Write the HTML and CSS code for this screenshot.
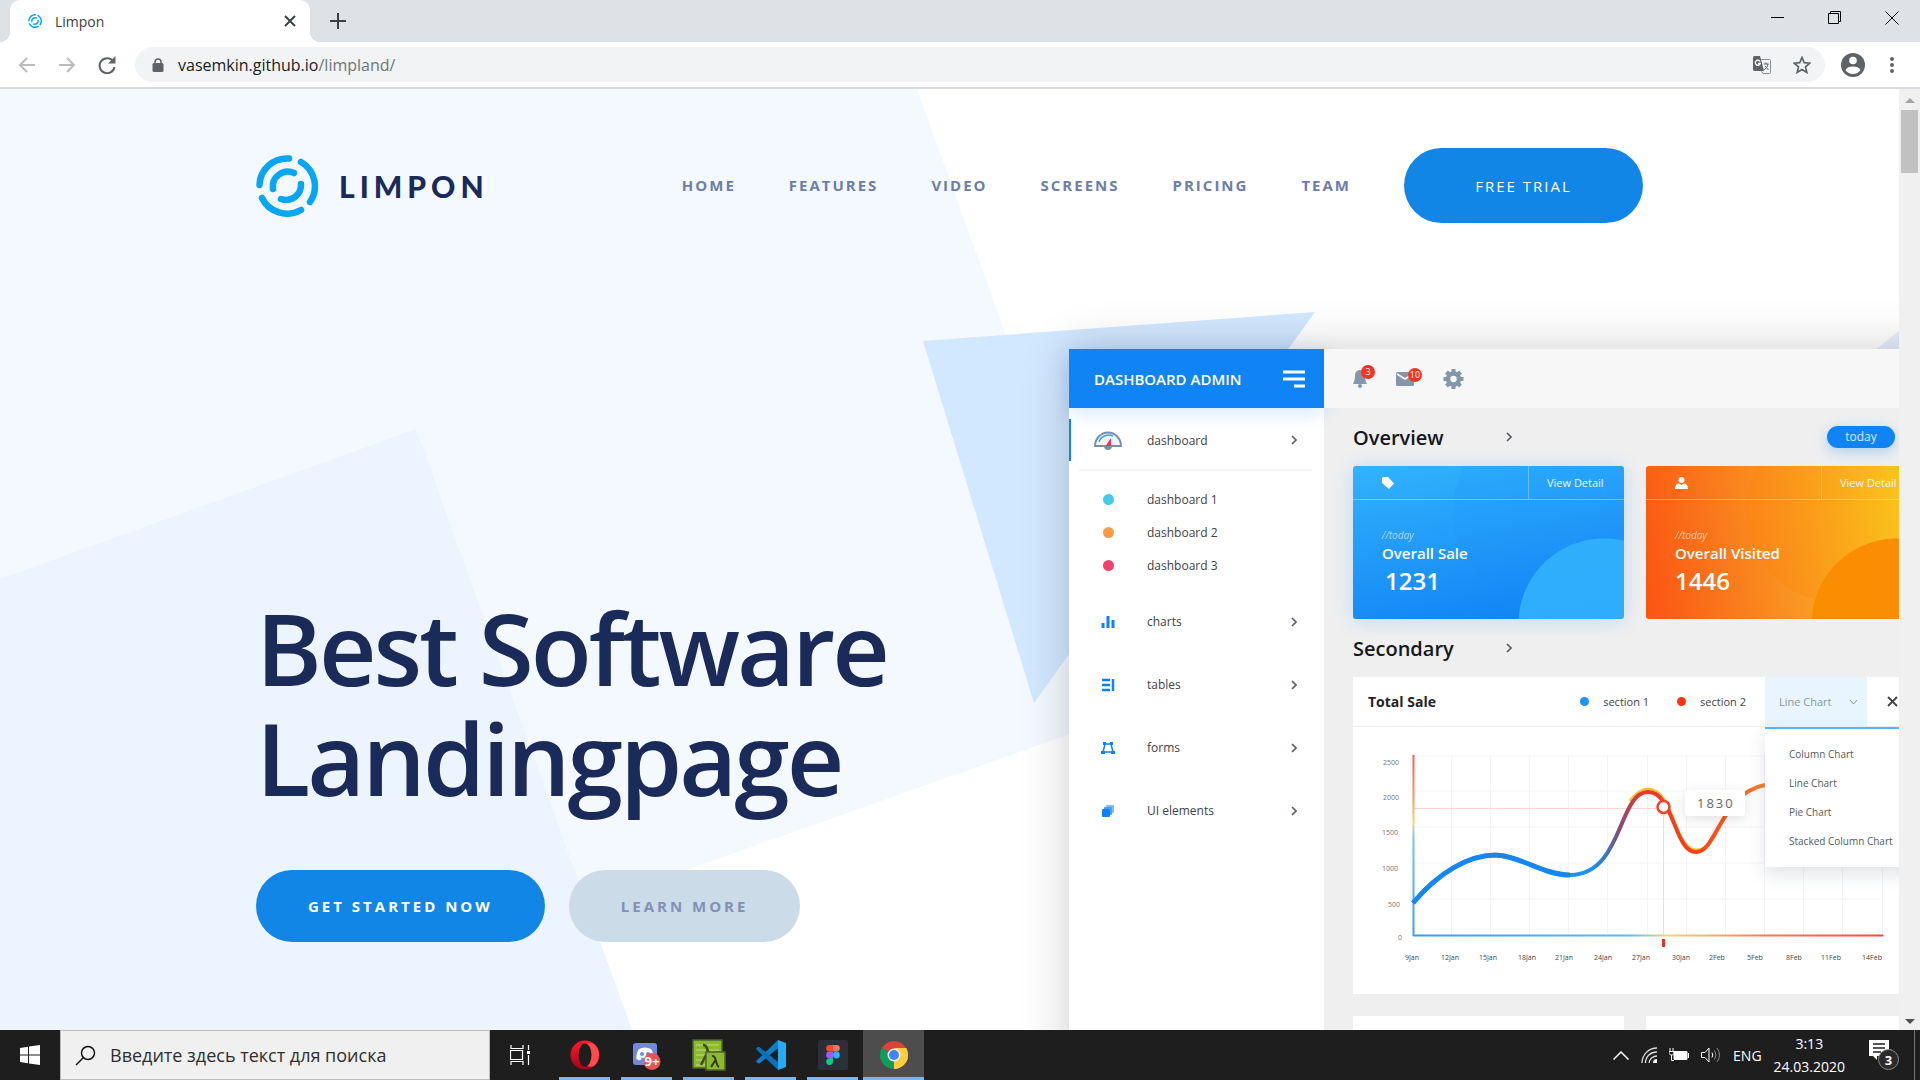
FILE: index.html
```html
<!DOCTYPE html>
<html lang="en">
<head>
<meta charset="utf-8">
<title>Limpon</title>
<link rel="stylesheet" href="styles.css">
</head>
<body>
<svg class="defs" width="0" height="0" aria-hidden="true">
  <symbol id="logo" viewBox="0 0 62 62">
    <g fill="none" stroke="#05a6f4" stroke-width="6.500" stroke-linecap="round">
      <path d="M33 3.500A27.500 27.500 0 0 0 3.500 30"/>
      <path d="M45 7A28 28 0 0 1 54 47"/>
      <path d="M6 43A28 28 0 0 0 45 55"/>
      <path d="M38 18A15 15 0 0 0 17 34"/>
      <path d="M45 29A15 15 0 0 1 25 44"/>
    </g>
  </symbol>
  <symbol id="chev" viewBox="0 0 6 10"><path d="M1 1l4 4-4 4" fill="none" stroke="#5a5f67" stroke-width="1.700"/></symbol>
</svg>

<header class="browser">
  <div class="tabstrip">
    <div class="tab">
      <svg class="favicon"><use href="#logo"/></svg>
      <span class="tab-title">Limpon</span>
      <button class="bare" aria-label="Close tab"><svg width="12" height="12" viewBox="0 0 12 12"><path d="M1 1l10 10M11 1L1 11" stroke="#3c4043" stroke-width="2"/></svg></button>
    </div>
    <button class="bare new-tab" aria-label="New tab"><svg width="16" height="16" viewBox="0 0 16 16"><path d="M8 0v16M0 8h16" stroke="#3c4043" stroke-width="2"/></svg></button>
    <div class="window-controls">
      <button class="bare" aria-label="Minimize"><svg width="14" height="14" viewBox="0 0 14 14"><path d="M0 6.500h13" stroke="#000"/></svg></button>
      <button class="bare" aria-label="Restore"><svg width="14" height="14" viewBox="0 0 14 14"><path d="M.5 2.500h10v10H.5zM2.500 2.500v-2h10v10h-2" fill="none" stroke="#000"/></svg></button>
      <button class="bare" aria-label="Close"><svg width="14" height="14" viewBox="0 0 14 14"><path d="M.5.5l13 13M13.500.5l-13 13" stroke="#000"/></svg></button>
    </div>
  </div>
  <div class="toolbar">
    <button class="bare tool" aria-label="Back"><svg width="18" height="18" viewBox="0 0 18 18"><path d="M17 9H2M9 2L2 9l7 7" fill="none" stroke="#babcbe" stroke-width="2"/></svg></button>
    <button class="bare tool" aria-label="Forward"><svg width="18" height="18" viewBox="0 0 18 18"><path d="M1 9h15M9 2l7 7-7 7" fill="none" stroke="#babcbe" stroke-width="2"/></svg></button>
    <button class="bare tool" aria-label="Reload"><svg width="18" height="18" viewBox="0 0 18 18"><path d="M15 5A7.500 7.500 0 1 0 16.500 11" fill="none" stroke="#5f6368" stroke-width="2"/><path d="M17.500 0v7.500H10z" fill="#5f6368"/></svg></button>
    <div class="omnibox">
      <svg width="12" height="14" viewBox="0 0 12 14"><path d="M3 6V4a3 3 0 0 1 6 0v2" fill="none" stroke="#5f6368" stroke-width="1.500"/><rect x=".5" y="5" width="11" height="9" rx="1.500" fill="#5f6368"/></svg>
      <span class="url">vasemkin.github.io<span class="path">/limpland/</span></span>
      <svg class="translate" width="18" height="18" viewBox="0 0 18 18"><path d="M8 3.500h8.500a1 1 0 0 1 1 1v12a1 1 0 0 1-1 1H10l-2-3" fill="none" stroke="#8a8d91"/><path d="M1.500 0H7l4 15H1.500A1.500 1.500 0 0 1 0 13.500v-12A1.500 1.500 0 0 1 1.500 0z" fill="#5f6368"/><path d="M7 5.500a2.500 2.500 0 1 0 .2 2H5" fill="none" stroke="#fff" stroke-width="1.300"/><path d="M10.500 8h5M13 6.500V8M15 8c-.5 3-2 4.500-4 6M12 10l3.500 4" fill="none" stroke="#5f6368"/></svg>
      <svg width="18" height="18" viewBox="0 0 18 18"><path d="M9 1.500l2.200 5.200 5.600.5-4.300 3.700 1.300 5.500L9 13.500l-4.800 2.900 1.300-5.500L1.200 7.200l5.600-.5z" fill="none" stroke="#5f6368" stroke-width="1.700"/></svg>
    </div>
    <button class="bare" aria-label="Profile"><svg width="24" height="24" viewBox="0 0 24 24"><circle cx="12" cy="12" r="12" fill="#5f6368"/><circle cx="12" cy="7.500" r="3.800" fill="#fff"/><path d="M4.500 17c1-2.500 4-3.500 7.500-3.500s6.500 1 7.500 3.500a9 9 0 0 1-15 0z" fill="#fff"/></svg></button>
    <button class="bare menu-dots" aria-label="Menu"><svg width="4" height="18" viewBox="0 0 4 18"><g fill="#5f6368"><circle cx="2" cy="3" r="2"/><circle cx="2" cy="9" r="2"/><circle cx="2" cy="15" r="2"/></g></svg></button>
  </div>
</header>

<div class="viewport">
<main class="page">
  <svg class="backdrop" viewBox="0 0 1899 941" preserveAspectRatio="xMinYMin slice" aria-hidden="true">
    <path d="M0 0h917l224 620L300 918 0 941z" fill="#f4f9ff"/>
    <path d="M0 490l416-150 216 601H0z" fill="#ecf5ff"/>
    <path d="M923 252l392-29-281 391z" fill="#d2e8ff"/>
    <path d="M1899 242l-60 48h60z" fill="#e6effd"/>
  </svg>

  <div class="site-header">
    <a class="brand" href="#"><svg class="brand-mark"><use href="#logo"/></svg><span class="brand-name">LIMPON</span></a>
    <nav class="site-nav">
      <a href="#">HOME</a><a href="#">FEATURES</a><a href="#">VIDEO</a><a href="#">SCREENS</a><a href="#">PRICING</a><a href="#">TEAM</a>
      <button class="pill trial">FREE TRIAL</button>
    </nav>
  </div>

  <section class="hero">
    <div class="hero-copy">
      <h1>Best Software Landingpage</h1>
      <div class="hero-actions">
        <button class="pill primary">GET STARTED NOW</button>
        <button class="pill secondary">LEARN MORE</button>
      </div>
    </div>

    <div class="dashboard">
      <aside class="side">
        <div class="side-head"><span>DASHBOARD ADMIN</span>
          <svg width="24" height="20" viewBox="0 0 24 20"><path d="M1 3h22M1 10h22M12 17h11" stroke="#fff" stroke-width="3"/></svg></div>
        <div class="side-item active">
          <svg width="30" height="20" viewBox="0 0 30 20"><path d="M2 16a13 13.500 0 0 1 26 0z" fill="#f4f7fa" stroke="#7d8ea4" stroke-width="2"/><path d="M6 12a10 9 0 0 1 14-6" fill="none" stroke="#36a0f6" stroke-width="1.500"/><path d="M18 8l0 9h-6z" fill="#f0304f"/><path d="M11 16a4 4 0 0 0 8 0z" fill="#7d8ea4"/></svg>
          <span>dashboard</span><svg class="chev"><use href="#chev"/></svg>
        </div>
        <ul class="sub">
          <li><i class="dot cyan"></i><span>dashboard 1</span></li>
          <li><i class="dot amber"></i><span>dashboard 2</span></li>
          <li><i class="dot rose"></i><span>dashboard 3</span></li>
        </ul>
        <div class="side-item"><svg width="14" height="14" viewBox="0 0 14 14"><path d="M2 8v5M7 1v12M12 5v8" stroke="#0f80f5" stroke-width="3"/></svg><span>charts</span><svg class="chev"><use href="#chev"/></svg></div>
        <div class="side-item"><svg width="14" height="14" viewBox="0 0 14 14"><path d="M1 2h8M1 7h8M1 12h8M12 1v12" stroke="#0f80f5" stroke-width="2.500"/></svg><span>tables</span><svg class="chev"><use href="#chev"/></svg></div>
        <div class="side-item"><svg width="14" height="14" viewBox="0 0 14 14"><path d="M4 3h6l2 8H2z" fill="none" stroke="#0f80f5" stroke-width="1.500"/><path d="M2 1h3v3H2zM9 1h3v3H9zM0 10h4v3H0zM10 10h4v3h-4z" fill="#0f80f5"/></svg><span>forms</span><svg class="chev"><use href="#chev"/></svg></div>
        <div class="side-item"><svg width="14" height="14" viewBox="0 0 14 14"><rect x="5" y="1" width="8" height="8" rx="1" fill="#7dbcfb"/><rect x="3" y="3" width="8" height="8" rx="1" fill="#46a0f9"/><rect x="1" y="5" width="8" height="8" rx="1" fill="#0f80f5"/></svg><span>UI elements</span><svg class="chev"><use href="#chev"/></svg></div>
      </aside>

      <div class="main">
        <div class="topbar">
          <span class="notice"><svg width="14" height="20" viewBox="0 0 14 20"><path d="M7 1a5 5 0 0 1 5 5c0 5 1 7 2 9H0c1-2 2-4 2-9a5 5 0 0 1 5-5z" fill="#8496ac"/><circle cx="7" cy="17" r="2" fill="#8496ac"/></svg><b class="badge">3</b></span>
          <span class="notice mail"><svg width="18" height="14" viewBox="0 0 18 14"><rect width="18" height="14" rx="1.500" fill="#8496ac"/><path d="M1 2l8 5 8-5" fill="none" stroke="#f6f6f6" stroke-width="1.500"/></svg><b class="badge">10</b></span>
          <svg width="21" height="20" viewBox="-10 -10 20 20"><circle r="5.500" fill="none" stroke="#8496ac" stroke-width="4.500"/><path d="M0-10v4M0 6v4M-10 0h4M6 0h4M-7-7l3 3M4 4l3 3M-7 7l3-3M4-4l3-3" stroke="#8496ac" stroke-width="4"/></svg>
        </div>
        <div class="row-title"><h2>Overview</h2><svg class="chev"><use href="#chev"/></svg><button class="today">today</button></div>
        <div class="cards">
          <article class="card sale">
            <div class="card-head"><svg width="12" height="12" viewBox="0 0 12 12"><path d="M0 1.500A1.500 1.500 0 0 1 1.500 0H6l6 6.500L7 12 0 6z" fill="#fff"/></svg><a href="#">View Detail</a></div>
            <p class="when">//today</p><h3>Overall Sale</h3><p class="count shifted">1231</p>
          </article>
          <article class="card visited">
            <div class="card-head"><svg width="13" height="12" viewBox="0 0 13 12"><circle cx="6.500" cy="3" r="3" fill="#fff"/><path d="M0 12c0-4 2-5.500 4-5.500l2.500 1.500L9 6.500c2 0 4 1.500 4 5.500z" fill="#fff"/></svg><a href="#">View Detail</a></div>
            <p class="when">//today</p><h3>Overall Visited</h3><p class="count">1446</p>
          </article>
        </div>
        <div class="row-title"><h2>Secondary</h2><svg class="chev"><use href="#chev"/></svg></div>
        <section class="panel">
          <div class="panel-head">
            <h3>Total Sale</h3>
            <span class="legend"><i class="dot blue"></i>section 1</span>
            <span class="legend"><i class="dot red"></i>section 2</span>
            <div class="picker">
              <select aria-label="Chart type"><option>Line Chart</option><option>Column Chart</option><option>Pie Chart</option><option>Stacked Column Chart</option></select>
              <svg class="caret" width="9" height="6" viewBox="0 0 9 6"><path d="M1 1l3.500 4L8 1" fill="none" stroke="#8b98a5"/></svg>
              <ul class="options"><li>Column Chart</li><li>Line Chart</li><li>Pie Chart</li><li>Stacked Column Chart</li></ul>
            </div>
            <button class="bare close" aria-label="Close panel"><svg width="11" height="11" viewBox="0 0 11 11"><path d="M1 1l9 9M10 1l-9 9" stroke="#444" stroke-width="1.800"/></svg></button>
          </div>
          <svg class="chart" width="564" height="267" viewBox="0 0 564 267">
            <defs>
              <linearGradient id="gy" gradientUnits="userSpaceOnUse" x1="0" y1="28" x2="0" y2="208"><stop offset="0" stop-color="#ff5a4d"/><stop offset=".25" stop-color="#ff9a5a"/><stop offset=".38" stop-color="#f9d876"/><stop offset=".46" stop-color="#6cc9f8"/><stop offset="1" stop-color="#3a9af8"/></linearGradient>
              <linearGradient id="gx" gradientUnits="userSpaceOnUse" x1="60" y1="0" x2="530" y2="0"><stop offset="0" stop-color="#3a9af8"/><stop offset=".46" stop-color="#5cbcf5"/><stop offset=".54" stop-color="#f6d67a"/><stop offset=".75" stop-color="#fb7a50"/><stop offset="1" stop-color="#f8493d"/></linearGradient>
              <linearGradient id="gl" gradientUnits="userSpaceOnUse" x1="60" y1="0" x2="412" y2="0"><stop offset="0" stop-color="#0a78f2"/><stop offset=".5" stop-color="#1e94f2"/><stop offset=".54" stop-color="#2f7fc6"/><stop offset=".59" stop-color="#8a4a70"/><stop offset=".65" stop-color="#e8382c"/><stop offset=".82" stop-color="#fb4418"/><stop offset="1" stop-color="#f58030"/></linearGradient>
            </defs>
            <path d="M60 29H530M60 64H530M60 100H530M60 136H530M60 172H530M98.500 28V208M137.500 28V208M176.500 28V208M215.500 28V208M254.500 28V208M294.500 28V208M333.500 28V208M372.500 28V208M411.500 28V208M450.500 28V208M489.500 28V208M529.500 28V208" fill="none" stroke="#f4f4f7"/>
            <path d="M60 81.500H310M310.500 81V208" fill="none" stroke="#fdd3d3"/>
            <path d="M60.500 28V208" stroke="url(#gy)" stroke-width="2"/>
            <path d="M60 208H530V209H60z" fill="url(#gx)" stroke="url(#gx)"/>
            <path d="M277 74C283 66 289 62 295 62C321 62 321 123 343 123C356 123 362 108 370 92" fill="none" stroke="#f9c23c" stroke-width="3"/>
            <path d="M60 176C86 145 116 128 143 128C168 129 190 148 217 148C270 148 265 65 295 65C321 65 321 125 343 125C364 125 368 66 412 58" fill="none" stroke="url(#gl)" stroke-width="4"/>
            <path d="M60 176C86 145 116 128 143 128C168 129 190 148 217 148" fill="none" stroke="#1687f2" stroke-width="5"/>
            <circle cx="310.500" cy="80" r="6" fill="#fff" stroke="#f4432c" stroke-width="2.500"/>
            <path d="M310.500 212v8" stroke="#f62d20" stroke-width="3"/>
            <rect class="tip" x="332" y="63" width="60" height="26" rx="3"/>
            <text class="tip-text" x="344" y="81">1830</text>
            <g class="tick" text-anchor="end"><text x="46" y="38">2500</text><text x="46" y="73">2000</text><text x="45" y="108">1500</text><text x="45" y="144">1000</text><text x="47" y="180">500</text><text x="49" y="213">0</text></g>
            <g class="tick dark" text-anchor="middle"><text x="59" y="233">9Jan</text><text x="97" y="233">12Jan</text><text x="135" y="233">15Jan</text><text x="174" y="233">18Jan</text><text x="211" y="233">21Jan</text><text x="250" y="233">24Jan</text><text x="288" y="233">27Jan</text><text x="328" y="233">30Jan</text><text x="364" y="233">2Feb</text><text x="402" y="233">5Feb</text><text x="441" y="233">8Feb</text><text x="478" y="233">11Feb</text><text x="519" y="233">14Feb</text></g>
          </svg>
        </section>
        <div class="cards next"><div class="blank"></div><div class="blank"></div></div>
      </div>
    </div>
  </section>
</main>
<div class="scrollbar" aria-hidden="true">
  <svg width="10" height="5" viewBox="0 0 10 5"><path d="M0 5l5-5 5 5z" fill="#a3a3a3"/></svg>
  <div class="thumb"></div>
  <svg class="down" width="10" height="5" viewBox="0 0 10 5"><path d="M0 0l5 5 5-5z" fill="#505050"/></svg>
</div>
</div>

<footer class="taskbar">
  <button class="bare start" aria-label="Start"><svg width="20" height="20" viewBox="0 0 20 20"><path d="M0 3l8-1.200V9.500H0zM9 1.600L20 0v9.500H9zM0 10.500h8v7.700L0 17zM9 10.500h11V20L9 18.400z" fill="#fff"/></svg></button>
  <label class="search"><svg width="21" height="21" viewBox="0 0 21 21"><circle cx="13" cy="8" r="6.500" fill="none" stroke="#111" stroke-width="1.500"/><path d="M8.500 12.500L1 20" stroke="#111" stroke-width="1.500"/></svg><input type="text" placeholder="Введите здесь текст для поиска" aria-label="Поиск"></label>
  <button class="bare taskview" aria-label="Task view"><svg width="21" height="20" viewBox="0 0 21 20"><path d="M1 0v3.500h12V0M1 20v-3.500h12V20M.5 5.500h12v9H.5zM18.500 0v5M18.500 10v10" fill="none" stroke="#fff" stroke-width="1.200"/><path d="M17 6h3v3h-3z" fill="#fff"/></svg></button>
  <div class="apps">
    <button class="bare app" aria-label="Opera"><svg width="30" height="30" viewBox="0 0 30 30"><defs><linearGradient id="op" x2="0" y2="1"><stop stop-color="#ff1b2d"/><stop offset="1" stop-color="#a70014"/></linearGradient></defs><circle cx="15" cy="15" r="14.500" fill="url(#op)"/><path d="M15 5a9 10 0 0 1 9-1 14.500 14.500 0 0 1 0 22 10 10 0 0 1-9-1z" fill="#ff4b4b"/><ellipse cx="15" cy="15" rx="6.500" ry="11.500" fill="#1e1e1e"/></svg></button>
    <button class="bare app" aria-label="Discord"><svg width="30" height="30" viewBox="0 0 30 30"><rect x="1" y="3" width="24" height="22" rx="3" fill="#7289da"/><path d="M7 9c4-2 8-2 12 0 2 3 3 6 2.500 10-2 1.500-3 1.500-4 1l-1-2h-7l-1 2c-1 .5-2 .5-4-1C4 15 5 12 7 9z" fill="#fff"/><circle cx="10" cy="14" r="2" fill="#7289da"/><circle cx="16" cy="14" r="2" fill="#7289da"/><circle cx="20" cy="21.500" r="8.500" fill="#ec5353"/><text x="20" y="26" text-anchor="middle" class="badge-text">9+</text></svg></button>
    <button class="bare app" aria-label="Notepads"><svg width="34" height="32" viewBox="0 0 34 32"><path d="M1 1h29v28H1z" fill="#8cb82b" stroke="#4d6330" stroke-width="1.500"/><path d="M4 6h23M4 11h23M4 16h23M4 21h23M4 26h20" stroke="#c3dc85" stroke-width="1.200"/><path d="M11 6c6-1 5 14 9 20M15 14L9 26" fill="none" stroke="#3b4b16" stroke-width="2.500"/><path d="M14 13h19v18H14z" fill="#8cb82b" stroke="#4d6330" stroke-width="1.500"/><path d="M20 17c5-1 3 9 7 11M23.500 21L19 28" fill="none" stroke="#2d3b10" stroke-width="2"/></svg></button>
    <button class="bare app" aria-label="Visual Studio Code"><svg width="30" height="30" viewBox="0 0 30 30"><path d="M22 0L3 18.500 0 21l1.500 2 2 .5L22 8z" fill="#0a7fd0"/><path d="M1.500 7L0 9l3 3 19 18V22L3.500 7z" fill="#0b70b8"/><path d="M22 0l8 3v24l-8 3z" fill="#29a9f3"/></svg></button>
    <button class="bare app" aria-label="Figma"><svg width="30" height="30" viewBox="0 0 30 30"><rect width="30" height="30" rx="2" fill="#2c2e3a"/><path d="M15 5h-3.500a3.300 3.300 0 0 0 0 6.600H15z" fill="#f24e1e"/><path d="M15 5h3.500a3.300 3.300 0 0 1 0 6.600H15z" fill="#ff7262"/><path d="M15 11.600h-3.500a3.300 3.300 0 0 0 0 6.600H15z" fill="#a259ff"/><circle cx="18.400" cy="15" r="3.400" fill="#1abcfe"/><path d="M15 18.200h-3.500a3.400 3.400 0 1 0 3.500 3.400z" fill="#0acf83"/></svg></button>
    <button class="bare app current" aria-label="Chrome"><svg width="28" height="28" viewBox="0 0 28 28"><path d="M14 14L1.900 7a14 14 0 0 1 24.200 0z" fill="#db4437"/><path d="M14 14L26.100 7A14 14 0 0 1 14 28z" fill="#ffcd40"/><path d="M14 14L14 28A14 14 0 0 1 1.900 7z" fill="#0f9d58"/><path d="M14 7h12.100a14 14 0 0 1-12.100 21l6.100-10.500z" fill="#ffcd40"/><circle cx="14" cy="14" r="6.500" fill="#f1f1f1"/><circle cx="14" cy="14" r="5" fill="#4285f4"/></svg></button>
  </div>
  <div class="tray">
    <svg width="16" height="9" viewBox="0 0 16 9"><path d="M.5 8.500L8 1l7.500 7.500" fill="none" stroke="#fff" stroke-width="1.500"/></svg>
    <svg width="16" height="16" viewBox="0 0 16 16"><g fill="none" stroke="#ddd" stroke-width="1.300"><path d="M1 16A15 15 0 0 1 16 1M4.500 16A11 11 0 0 1 16 5M8 16a8 8 0 0 1 8-7"/></g><path d="M12 16a4 4 0 0 1 4-4v4z" fill="#fff"/></svg>
    <svg width="20" height="14" viewBox="0 0 20 14"><path d="M5 3.500h13v8H5z" fill="#fff" stroke="#fff"/><path d="M19.500 5v5M1 0v3M4 0v3M0 3.500h5v2L3.500 7h-2L0 5.500zM2.500 7v5.500H5" fill="none" stroke="#fff"/></svg>
    <svg width="20" height="18" viewBox="0 0 20 18"><path d="M.5 6.500H4l4-4.500v14l-4-4.500H.5z" fill="none" stroke="#fff"/><path d="M11 6.500q1.500 2.500 0 5" fill="none" stroke="#fff"/><path d="M13.500 4.500q3 4.500 0 9M16 2q5 7 0 14" fill="none" stroke="#8a8a8a"/></svg>
    <span>ENG</span>
    <div class="clock"><span>3:13</span><span>24.03.2020</span></div>
    <svg class="notes" width="30" height="30" viewBox="0 0 30 30"><path d="M0 0h20v16H8l0 4-4-4H0z" fill="#fff"/><path d="M4 4h12M4 8h12M4 12h8" stroke="#1e1e1e" stroke-width="1.300"/><circle cx="19.500" cy="19.500" r="10" fill="#2b2b2b" stroke="#8a8a8a"/><text x="19.500" y="25" text-anchor="middle" class="badge-text">3</text></svg>
  </div>
  <button class="bare desktop" aria-label="Show desktop"></button>
</footer>
</body>
</html>
```

FILE: styles.css
```css
* { box-sizing: border-box; }
body {
  margin: 0;
  height: 100vh;
  display: flex;
  flex-direction: column;
  overflow: hidden;
  font-family: "Open Sans", "Noto Sans", sans-serif;
  background: #fff;
}
ul, h1, h2, h3, p { margin: 0; padding: 0; list-style: none; }
button, input, select { font-family: inherit; }
svg { flex: none; display: block; }
.defs { position: absolute; }
.bare { border: 0; background: none; padding: 0; display: flex; align-items: center; justify-content: center; }

/* Browser frame */
.tabstrip { height: 42px; background: #dee1e6; display: flex; padding-left: 10px; }
.tab {
  position: relative;
  width: 300px;
  background: #fff;
  border-radius: 10px 10px 0 0;
  display: flex;
  align-items: center;
  padding: 0 14px 0 18px;
  gap: 13px;
}
.tab::before, .tab::after {
  content: "";
  position: absolute;
  bottom: 0;
  width: 10px;
  height: 10px;
}
.tab::before { left: -10px; background: radial-gradient(circle at 0 0, #dee1e6 10px, #fff 10px); }
.tab::after { right: -10px; background: radial-gradient(circle at 100% 0, #dee1e6 10px, #fff 10px); }
.favicon { width: 14px; height: 14px; }
.tab-title { flex: 1; font-size: 14px; color: #3c4043; }
.new-tab { width: 56px; }
.window-controls { margin-left: auto; display: flex; height: 36px; }
.window-controls button { width: 57px; }
.toolbar {
  height: 47px;
  border-bottom: 2px solid #d9dae0;
  display: flex;
  align-items: center;
  padding: 0 26px 0 7px;
}
.tool { width: 40px; height: 40px; }
.omnibox {
  flex: 1;
  height: 35px;
  margin: 0 16px 0 8px;
  padding: 0 14px 0 17px;
  border-radius: 18px;
  background: #f1f3f4;
  display: flex;
  align-items: center;
}
.url { flex: 1; margin-left: 14px; font-size: 16px; color: #202124; }
.path { color: #70757a; }
.translate { margin-right: 22px; }
.menu-dots { margin-left: 25px; }

/* Page viewport */
.viewport { flex: 1; min-height: 0; display: flex; }
.page { flex: 1; min-width: 0; position: relative; overflow: hidden; }
.backdrop { position: absolute; width: 100%; height: 100%; }
.scrollbar {
  width: 21px;
  background: #f0f0f0;
  display: flex;
  flex-direction: column;
  align-items: center;
  padding: 9px 0 6px;
}
.thumb { width: 17px; height: 63px; margin-top: 7px; background: #c1c1c1; }
.down { margin-top: auto; }

.site-header, .hero { position: relative; margin-left: max(24px, calc((100% - 1387px) / 2)); }
.site-header {
  max-width: 1387px;
  padding-top: 59px;
  display: flex;
  align-items: center;
  justify-content: space-between;
}
.brand { display: flex; align-items: center; gap: 21px; text-decoration: none; }
.brand-mark { width: 62px; height: 62px; }
.brand-name { font: 900 30px/40px Lato, sans-serif; letter-spacing: 5px; color: #1a2b5a; }
.site-nav { display: flex; align-items: center; gap: 53px; }
.site-nav a { font-size: 15px; line-height: 24px; padding-bottom: 2px; font-weight: 700; letter-spacing: 2px; color: #6d7dab; text-decoration: none; }
.pill {
  height: 72px;
  padding: 0 52px;
  border: 0;
  border-radius: 38px;
  font-size: 15px;
  font-weight: 700;
  letter-spacing: 3px;
  color: #fff;
  background: #1186e6;
}
.trial { height: 75px; width: 239px; font-weight: 400; letter-spacing: 2px; }
.secondary { color: #8290b5; background: #cbdbe8; }

.hero { display: grid; grid-template-columns: 813px 1fr; align-items: start; }
.hero-copy { padding-top: 369px; }
.hero h1 {
  max-width: 700px;
  font-size: 100px;
  line-height: 110px;
  font-weight: 600;
  letter-spacing: -3px;
  color: #1a2b5a;
}
.hero-actions { display: flex; gap: 24px; margin-top: 58px; }

/* Product preview */
.dashboard {
  margin-top: 126px;
  width: 1000px;
  display: flex;
  background: #efefef;
  box-shadow: 0 0 45px rgba(0, 0, 0, .2);
  color: #3d4249;
}
.side { width: 255px; background: #fff; font-size: 12px; }
.side-head {
  height: 59px;
  padding: 0 18px 0 25px;
  display: flex;
  align-items: center;
  justify-content: space-between;
  color: #fff;
  background: #1083f5;
  font-size: 15px;
  font-weight: 600;
  box-shadow: 0 4px 20px rgba(16, 131, 245, .2);
}
.side-item, .sub li { display: grid; grid-template-columns: 78px 1fr 33px; align-items: center; height: 63px; }
.side-item > svg:first-child, .sub .dot { justify-self: center; }
.chev { width: 6px; height: 10px; }
.side-item.active {
  height: 42px;
  margin: 11px 0 8px;
  background: linear-gradient(#1083f5, #1083f5) left / 2px 100% no-repeat;
}
.sub { padding-bottom: 8px; }
.sub::before { content: ""; display: block; height: 2px; margin: 0 12px 12px 10px; background: #f4f4f4; }
.sub li { height: 33px; }
.dot { width: 11px; height: 11px; border-radius: 50%; }
.cyan { background: #47c9e8; }
.amber { background: #f99a45; }
.rose { background: #f0426a; }
.blue { background: #1b93f8; }
.red { background: #f93613; }

.main { flex: 1; }
.topbar { height: 59px; background: #f7f7f7; display: flex; align-items: center; padding-left: 29px; gap: 21px; }
.notice { position: relative; width: 22px; }
.notice.mail { width: 26px; }
.badge {
  position: absolute;
  right: 0;
  top: -4px;
  width: 14px;
  height: 14px;
  border-radius: 50%;
  background: #f8341f;
  color: #fff;
  font-size: 9px;
  line-height: 14px;
  font-weight: 400;
  text-align: center;
}
.row-title { width: 593px; padding: 0 22px 0 29px; height: 58px; display: flex; align-items: center; }
.row-title h2 { width: 153px; font-size: 20px; font-weight: 600; color: #14171c; }
.today {
  margin-left: auto;
  width: 68px;
  height: 22px;
  border: 0;
  border-radius: 11px;
  padding: 0;
  background: #1083f5;
  color: #d8ebff;
  font-size: 12px;
  line-height: 20px;
  box-shadow: 0 4px 14px rgba(16, 131, 245, .3);
}
.cards { display: flex; gap: 22px; margin-left: 29px; }
.card { width: 271px; height: 153px; border-radius: 3px; color: #fff; overflow: hidden; }
.sale {
  background:
    radial-gradient(circle at 251px 158px, rgba(50, 180, 253, .85) 85px, transparent 86px),
    radial-gradient(circle at 190px 45px, rgba(20, 140, 250, .12) 90px, transparent 91px),
    linear-gradient(170deg, #32b3fc, #0e80f5);
  box-shadow: 0 2px 20px rgba(16, 131, 245, .2);
}
.visited {
  background:
    radial-gradient(circle at 251px 158px, #fb8d03 85px, transparent 86px),
    radial-gradient(circle at 190px 45px, rgba(255, 130, 0, .25) 90px, transparent 91px),
    linear-gradient(80deg, #fb5313, #f99a22 55%, #f8d424 90%);
}
.card-head {
  height: 34px;
  display: flex;
  align-items: center;
  justify-content: space-between;
  padding-left: 29px;
  border-bottom: 1px solid rgba(255, 255, 255, .35);
}
.card-head a {
  width: 96px;
  line-height: 33px;
  padding-left: 18px;
  border-left: 1px solid rgba(255, 255, 255, .3);
  color: #e8f5ff;
  font-size: 11px;
  text-decoration: none;
}
.when { margin: 28px 0 0 29px; font-size: 10px; line-height: 14px; font-style: italic; opacity: .6; }
.card h3 { margin-left: 29px; font-size: 15px; line-height: 22px; font-weight: 600; }
.count { margin-left: 29px; font-size: 24px; line-height: 34px; font-weight: 600; }
.count.shifted { margin-left: 32px; }

.panel { width: 564px; margin-left: 29px; background: #fff; }
.panel-head { height: 50px; display: flex; align-items: center; padding-left: 15px; border-bottom: 1px solid #ededf0; }
.panel-head h3 { flex: 1; font-size: 14px; font-weight: 700; color: #1f242b; }
.legend { display: flex; align-items: center; font-size: 11px; margin-right: 19px; }
.legend + .legend { margin-left: 9px; }
.legend .dot { width: 9px; height: 9px; margin-right: 14px; }
.picker { position: relative; width: 102px; height: 50px; }
.picker select {
  appearance: none;
  width: 100%;
  height: 100%;
  border: 0;
  padding: 0 14px;
  background: #e8f4fe;
  color: #8b98a5;
  font-size: 11px;
}
.caret { position: absolute; right: 9px; top: 22px; }
.options {
  position: absolute;
  top: 50px;
  left: 0;
  width: 152px;
  padding: 11px 0 11px 24px;
  border-top: 2px solid #57b3fb;
  background: #fff;
  box-shadow: 0 8px 16px rgba(60, 80, 110, .15);
  font-size: 10px;
  line-height: 29px;
  color: #555a62;
  white-space: nowrap;
}
.close { width: 50px; }
.tip { fill: #fff; filter: drop-shadow(0 3px 6px rgba(0, 0, 0, .12)); }
.tip-text { font-size: 13px; letter-spacing: 2px; fill: #666; }
.tick { font-size: 7px; fill: #777; }
.tick.dark { fill: #444; }
.next { margin-top: 22px; }
.blank { width: 271px; height: 152px; background: #fff; }

/* Taskbar */
.taskbar { height: 50px; background: #1e1e1e; display: flex; color: #fff; }
.start { width: 60px; }
.search {
  width: 430px;
  border: 1px solid #bbb;
  background: #f0f0f0;
  display: flex;
  align-items: center;
  gap: 14px;
  padding-left: 14px;
}
.search input { flex: 1; border: 0; padding: 0; background: none; outline: 0; font-size: 18px; }
.search input::placeholder { color: #2f2f2f; opacity: 1; }
.taskview { width: 60px; }
.apps { display: flex; gap: 11px; margin-left: 9px; }
.app { width: 51px; border-bottom: 3px solid #76b9ed; border-top: 3px solid transparent; }
.app.current { width: 61px; margin-left: -6px; background: #4d4d4d; border-top-color: #4d4d4d; }
.badge-text { font-size: 13px; font-weight: 700; fill: #fff; }
.tray { margin-left: auto; display: flex; align-items: center; gap: 12px; padding-right: 15px; font-size: 14px; }
.clock { display: flex; flex-direction: column; align-items: center; line-height: 23px; font-size: 14px; }
.notes { margin-left: 12px; }
.desktop { width: 6px; border-left: 1px solid #777; }
```
